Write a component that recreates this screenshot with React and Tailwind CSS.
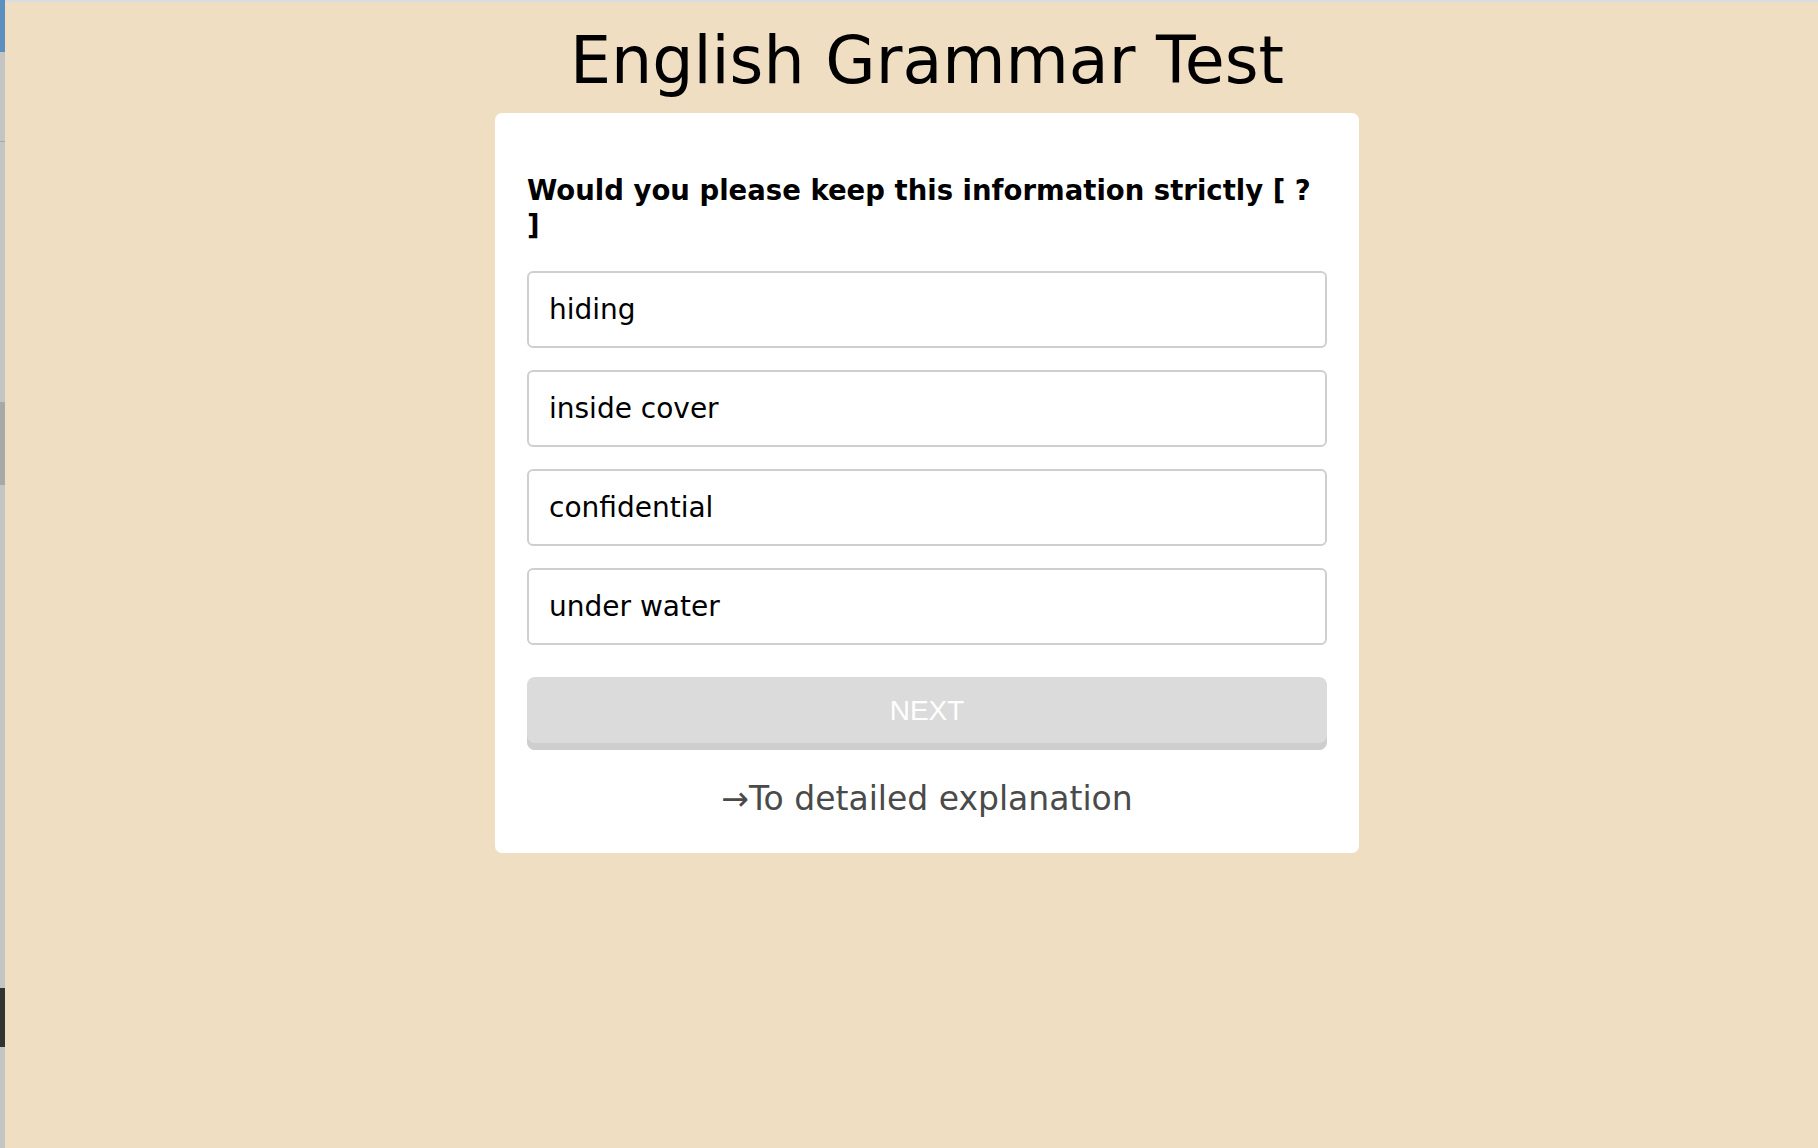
const OPTIONS = ["hiding", "inside cover", "confidential", "under water"];

export default function App() {
  return (
    <div className="min-h-screen flex bg-[#f0dec2] font-['DejaVu_Sans',sans-serif]">
      {/* window edge on the left */}
      <div className="w-[5px] shrink-0 flex flex-col bg-[#c4c4c4]">
        <div className="h-[52px] bg-[#5b8fc0]" />
        <div className="h-[60px]" />
        <div className="h-[30px] border-b border-[#aaa]" />
        <div className="h-[260px]" />
        <div className="h-[83px] bg-[#a8a8a8]" />
        <div className="h-[503px]" />
        <div className="h-[59px] bg-[#333]" />
      </div>

      <div className="flex-1 flex flex-col">
        <div className="h-[2px] bg-[#d9dde3]" />
        <div className="ml-[490px] w-[864px] flex flex-col">
          <h1 className="text-[65px] leading-none text-black text-center pt-[26px] pb-[20px]">
            English Grammar Test
          </h1>

          <div className="bg-white rounded-[7px] px-[32px] pt-[60px] pb-[32px]">
            <p className="text-[27.5px] font-bold leading-[35px] text-black">
              Would you please keep this information strictly [ ? ]
            </p>

            <div className="mt-[28px] flex flex-col gap-[22px]">
              {OPTIONS.map((o) => (
                <div
                  key={o}
                  className="h-[77px] border-2 border-[#cfcfcf] rounded-[6px] flex items-center px-[20px] text-[28px] text-black"
                >
                  {o}
                </div>
              ))}
            </div>

            <button className="mt-[32px] w-full h-[73px] rounded-[8px] bg-[#dbdbdb] shadow-[inset_0_-7px_0_#cecece] text-white text-[28px] font-['Liberation_Sans',sans-serif] pb-[6px]">
              NEXT
            </button>

            <div className="mt-[27px] text-center text-[33px] leading-[44px] text-[#4a4a4a]">
              →To detailed explanation
            </div>
          </div>
        </div>
      </div>
    </div>
  );
}
